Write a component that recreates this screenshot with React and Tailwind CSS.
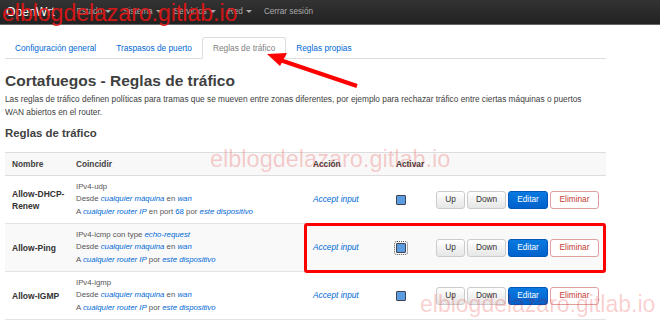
const navItems = ['Estado', 'Sistema', 'Servicios', 'Red'];

const tabs = [
  { label: 'Configuración general', active: false },
  { label: 'Traspasos de puerto', active: false },
  { label: 'Reglas de tráfico', active: true },
  { label: 'Reglas propias', active: false },
];

const A = ({ children, italic = true }) => (
  <span className={`text-[#0069d6] ${italic ? 'italic' : ''}`}>{children}</span>
);

const rules = [
  {
    name: 'Allow-DHCP-Renew',
    proto: <>IPv4-udp</>,
    to: (
      <>
        A <A>cualquier router IP</A> en port <A italic={false}>68</A> por <A>este dispositivo</A>
      </>
    ),
  },
  {
    name: 'Allow-Ping',
    proto: (
      <>
        IPv4-icmp con type <A>echo-request</A>
      </>
    ),
    to: (
      <>
        A <A>cualquier router IP</A> por <A>este dispositivo</A>
      </>
    ),
    focus: true,
  },
  {
    name: 'Allow-IGMP',
    proto: <>IPv4-igmp</>,
    to: (
      <>
        A <A>cualquier router IP</A> por <A>este dispositivo</A>
      </>
    ),
  },
];

const Caret = () => (
  <span className="inline-block w-0 h-0 border-l-[3px] border-r-[3px] border-t-[3px] border-l-transparent border-r-transparent border-t-[#aaa] ml-[3px] align-middle" />
);

const RowButtons = () => (
  <div className="flex gap-[2px] text-[8.3px]">
    <button className="w-[29px] h-[18px] rounded-[3px] border border-[#ccc] bg-gradient-to-b from-white to-[#e6e6e6] text-[#333]">Up</button>
    <button className="w-[39px] h-[18px] rounded-[3px] border border-[#ccc] bg-gradient-to-b from-white to-[#e6e6e6] text-[#333]">Down</button>
    <button className="w-[40px] h-[18px] rounded-[3px] border border-[#0055b8] bg-gradient-to-b from-[#0a7ae0] to-[#0061cc] text-white">Editar</button>
    <button className="w-[49px] h-[18px] rounded-[3px] border border-[#e0a0a0] bg-white text-[#c43c35]">Eliminar</button>
  </div>
);

export default function App() {
  return (
    <div className="relative w-[660px] h-[320px] overflow-hidden bg-white font-['Liberation_Sans',Arial,sans-serif] text-[#404040]">
      {/* top bar */}
      <div className="h-[25px] flex items-center bg-gradient-to-b from-[#333] to-[#222] border-b border-[#666]">
        <span className="ml-[6px] text-[12.2px] text-white">OpenWrt</span>
        <div className="ml-[22px] flex items-center gap-[12px] text-[8.2px] text-[#aaa]">
          {navItems.map((n) => (
            <span key={n} className="flex items-center">
              {n}
              <Caret />
            </span>
          ))}
          <span>Cerrar sesión</span>
        </div>
      </div>

      {/* tabs */}
      <div className="mt-[12px] mx-[5px] w-[601px] flex border-b border-[#ddd] h-[22px] text-[8.3px]">
        {tabs.map((t) => (
          <div
            key={t.label}
            className={`flex items-center px-[10px] -mb-px ${
              t.active ? 'border border-[#ddd] border-b-white bg-white text-[#808080] rounded-t-[3px]' : 'text-[#0069d6]'
            }`}
          >
            {t.label}
          </div>
        ))}
      </div>

      {/* heading */}
      <div className="px-[5px]">
        <h2 className="mt-[12px] text-[15.5px] leading-[20px] font-bold text-[#404040]">Cortafuegos - Reglas de tráfico</h2>
        <p className="mt-[2px] text-[8.3px] leading-[12.5px] w-[590px]">
          Las reglas de tráfico definen políticas para tramas que se mueven entre zonas diferentes, por ejemplo para rechazar tráfico entre ciertas máquinas o puertos WAN abiertos en el router.
        </p>
        <h3 className="mt-[8px] text-[11.4px] leading-[14px] font-bold">Reglas de tráfico</h3>

        <table className="mt-[12px] w-[601px] table-fixed border-collapse text-[8.3px]">
          <colgroup>
            <col className="w-[65px]" />
            <col className="w-[237px]" />
            <col className="w-[83px]" />
            <col className="w-[40px]" />
            <col className="w-[176px]" />
          </colgroup>
          <thead>
            <tr className="h-[23px] bg-[#f8f8f8] border-t border-b border-[#ddd] text-left">
              <th className="pl-[7px] font-bold">Nombre</th>
              <th className="pl-[6px] font-bold">Coincidir</th>
              <th className="pl-[6px] font-bold">Acción</th>
              <th className="pl-[6px] font-bold">Activar</th>
              <th />
            </tr>
          </thead>
          <tbody>
            {rules.map((r, i) => (
              <tr key={r.name} className={`h-[48px] border-b border-[#e4e4e4] ${i === 1 ? 'bg-[#f9f9f9]' : ''}`}>
                <td className="pl-[7px] pr-[3px] font-bold text-[8.5px] leading-[12px] text-[#333]">{r.name}</td>
                <td className="pl-[6px] text-[7.8px] leading-[12.3px] text-[#555]">
                  <div>{r.proto}</div>
                  <div>
                    Desde <A>cualquier máquina</A> en <A>wan</A>
                  </div>
                  <div>{r.to}</div>
                </td>
                <td className="pl-[6px] text-[8.3px]">
                  <A>Accept input</A>
                </td>
                <td className="pl-[6px]">
                  <div className={`w-[10px] h-[10px] rounded-[1px] border border-[#3d4652] bg-[#5b9be0] ${r.focus ? 'outline outline-1 outline-dotted outline-[#555] outline-offset-[1px]' : ''}`} />
                </td>
                <td className="pl-[6px]">
                  <RowButtons />
                </td>
              </tr>
            ))}
          </tbody>
        </table>
      </div>

      {/* annotation box */}
      <div className="absolute left-[304px] top-[223px] w-[302px] h-[50px] border-[3px] border-[#f00] rounded-[3px]" />

      {/* annotation arrow */}
      <svg className="absolute left-0 top-0" width="660" height="320">
        <line x1="357" y1="86" x2="280" y2="60" stroke="#f00" strokeWidth="4" />
        <polygon points="267,54 287,53 280,66" fill="#f00" />
      </svg>

      {/* watermarks */}
      <div className="absolute left-[2px] top-[-1px] text-[23px] leading-[28px] text-[#e41414] opacity-90 pointer-events-none">elblogdelazaro.gitlab.io</div>
      <div className="absolute left-[210px] top-[145px] text-[23.5px] leading-[28px] text-[rgba(225,0,0,0.2)] pointer-events-none">elblogdelazaro.gitlab.io</div>
      <div className="absolute left-[420px] top-[290px] text-[23px] leading-[28px] text-[rgba(225,0,0,0.2)] pointer-events-none">elblogdelazaro.gitlab.io</div>
    </div>
  );
}
